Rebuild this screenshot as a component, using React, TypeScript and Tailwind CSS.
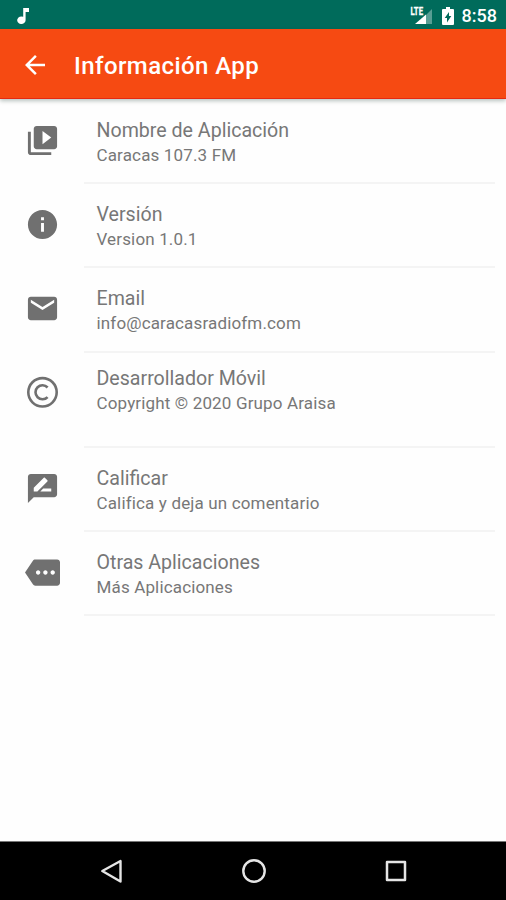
import React from 'react';
import { MdArrowBack, MdEmail, MdInfo, MdMore, MdRateReview, MdVideoLibrary } from 'react-icons/md';

interface InfoItem {
    icon: React.ComponentType<{ className?: string }>;
    title: string;
    subtitle: string;
    tall?: boolean;
}

const CopyrightIcon: React.FC<{ className?: string }> = ({ className }) => (
    <svg className={className} viewBox="0 0 35 35" fill="none" stroke="currentColor" strokeWidth="2.6">
        <circle cx="17.5" cy="17.3" r="14.2" />
        <path d="M22.6 12.5a7 7 0 1 0 0 9.6" />
    </svg>
);

const ITEMS: InfoItem[] = [
    { icon: MdVideoLibrary, title: 'Nombre de Aplicación', subtitle: 'Caracas 107.3 FM' },
    { icon: MdInfo, title: 'Versión', subtitle: 'Version 1.0.1' },
    { icon: MdEmail, title: 'Email', subtitle: 'info@caracasradiofm.com' },
    { icon: CopyrightIcon, title: 'Desarrollador Móvil', subtitle: 'Copyright © 2020 Grupo Araisa', tall: true },
    { icon: MdRateReview, title: 'Calificar', subtitle: 'Califica y deja un comentario' },
    { icon: MdMore, title: 'Otras Aplicaciones', subtitle: 'Más Aplicaciones' },
];

const StatusBar: React.FC = () => (
    <div className="flex h-[29px] shrink-0 items-center bg-[#006b5b] pl-4 pr-[9px] text-white">
        <svg className="mt-0.5 h-[18px] w-[14px]" viewBox="0 0 14 18" fill="currentColor">
            <path d="M7.2 1H13v4H9.6v8.2A4.2 3.8 0 1 1 7.2 9.8z" />
        </svg>
        <div className="ml-auto flex items-center">
            <svg className="mt-0.5 h-[20px] w-[24px]" viewBox="0 0 24 20" fill="currentColor">
                <path d="M22 3v15H16V9z" opacity=".35" />
                <path d="M16 8.5V18H5z" />
                <text x="0.5" y="9" className="font-[Roboto] text-[11px] font-bold" stroke="currentColor" strokeWidth=".3" textLength="12.5" lengthAdjust="spacingAndGlyphs">LTE</text>
            </svg>
            <svg className="ml-[8px] mt-[2px] h-[18px] w-[12px]" viewBox="0 0 12 18" fill="currentColor">
                <path fillRule="evenodd" d="M4 0h4v2h3a1 1 0 0 1 1 1v14a1 1 0 0 1-1 1H1a1 1 0 0 1-1-1V3a1 1 0 0 1 1-1h3zM7 5l-4.3 6H5v4.5L9.3 9H7z" />
            </svg>
            <span className="ml-[8px] mt-[3px] text-[18px] font-medium leading-5">8:58</span>
        </div>
    </div>
);

const Row: React.FC<{ item: InfoItem }> = ({ item }) => {
    const Icon = item.icon;
    return (
        <div className={item.tall ? 'flex h-[95.5px]' : 'flex h-[84.2px]'}>
            <div className="flex w-[84px] shrink-0 items-start pl-[24.5px] pt-[22.5px]">
                <Icon className="size-[35px] text-[#707070]" />
            </div>
            <div className={`mr-[11px] flex-1 whitespace-nowrap border-b-2 border-[#f4f4f4] pl-[12.5px] ${item.tall ? 'pt-[13px]' : 'pt-[17.6px]'}`}>
                <h2 className="text-[19.6px] leading-[25px] text-[#777]">{item.title}</h2>
                <p className="text-[17px] leading-[25px] tracking-[0.15px] text-[#777]">{item.subtitle}</p>
            </div>
        </div>
    );
};

const NavigationBar: React.FC = () => (
    <nav className="flex h-[59px] shrink-0 items-center justify-between border-t border-[#777] bg-black pl-[100px] pr-[98px] text-[#e5e5e5]">
        <svg className="h-[26px] w-[24px]" viewBox="0 0 24 26" fill="none" stroke="currentColor" strokeWidth="2.4" strokeLinejoin="round">
            <path d="M20.5 3v20.5L2.3 13z" />
        </svg>
        <svg className="size-[26px]" viewBox="0 0 26 26" fill="none" stroke="currentColor" strokeWidth="2.4">
            <circle cx="13" cy="13" r="10.7" />
        </svg>
        <svg className="size-[24px]" viewBox="0 0 24 24" fill="none" stroke="currentColor" strokeWidth="2.5" strokeLinejoin="round">
            <path d="M3 3h18v18H3z" />
        </svg>
    </nav>
);

const App: React.FC = () => (
    <div className="flex h-[900px] w-[506px] flex-col overflow-hidden bg-[#fefefe] font-[Roboto,sans-serif]">
        <StatusBar />
        <header className="z-10 flex h-[70px] shrink-0 items-center border-b border-[#e52a12] bg-[#f64a12] text-white shadow-[0_2px_4px_rgba(0,40,30,0.28)]">
            <button className="ml-5 mt-0.5" aria-label="Volver">
                <MdArrowBack className="size-[30px]" />
            </button>
            <h1 className="ml-6 mt-1 text-[24px] font-medium leading-8 tracking-[0.42px]">Información App</h1>
        </header>
        <main className="min-h-0 flex-1 pt-px">
            {ITEMS.map((item) => (
                <Row key={item.title} item={item} />
            ))}
        </main>
        <NavigationBar />
    </div>
);

export default App;
